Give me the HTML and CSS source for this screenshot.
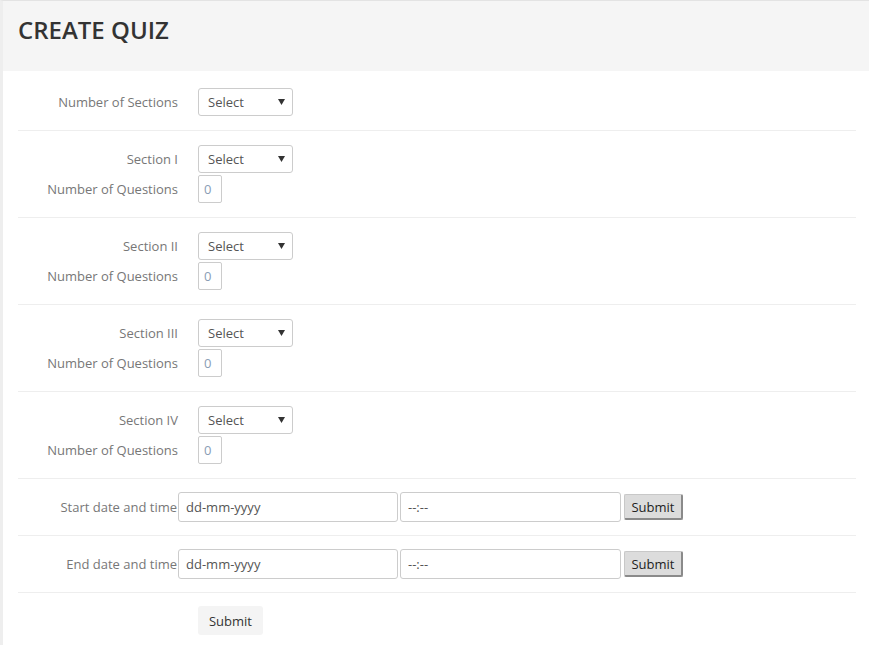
FILE: index.html
```html
<!DOCTYPE html>
<html>
<head>
<meta charset="utf-8">
<link rel="stylesheet" href="styles.css">
</head>
<body>
<div class="page">
  <div class="panel-head">
    <h1 class="title">CREATE QUIZ</h1>
  </div>
  <form class="form">
    <div class="row">
      <div class="field">
        <label class="label">Number of Sections</label>
        <select class="select"><option>Select</option></select>
      </div>
    </div>
    <div class="row">
      <div class="field">
        <label class="label">Section I</label>
        <select class="select"><option>Select</option></select>
      </div>
      <div class="field field-q">
        <label class="label">Number of Questions</label>
        <input class="num" type="text" placeholder="0">
      </div>
    </div>
    <div class="row">
      <div class="field">
        <label class="label">Section II</label>
        <select class="select"><option>Select</option></select>
      </div>
      <div class="field field-q">
        <label class="label">Number of Questions</label>
        <input class="num" type="text" placeholder="0">
      </div>
    </div>
    <div class="row">
      <div class="field">
        <label class="label">Section III</label>
        <select class="select"><option>Select</option></select>
      </div>
      <div class="field field-q">
        <label class="label">Number of Questions</label>
        <input class="num" type="text" placeholder="0">
      </div>
    </div>
    <div class="row">
      <div class="field">
        <label class="label">Section IV</label>
        <select class="select"><option>Select</option></select>
      </div>
      <div class="field field-q">
        <label class="label">Number of Questions</label>
        <input class="num" type="text" placeholder="0">
      </div>
    </div>
    <div class="row row-date">
      <div class="field field-date">
        <label class="label label-date">Start date and time</label>
        <input class="text date" type="text" value="dd-mm-yyyy">
        <input class="text time" type="text" value="--:--">
        <button class="btn-small" type="button">Submit</button>
      </div>
    </div>
    <div class="row row-date">
      <div class="field field-date">
        <label class="label label-date">End date and time</label>
        <input class="text date" type="text" value="dd-mm-yyyy">
        <input class="text time" type="text" value="--:--">
        <button class="btn-small" type="button">Submit</button>
      </div>
    </div>
    <div class="row row-submit">
      <button class="btn" type="button">Submit</button>
    </div>
  </form>
</div>
</body>
</html>
```

FILE: styles.css
```css
* { box-sizing: border-box; }
html, body { margin: 0; padding: 0; background: #fff; }
body {
  font-family: "Open Sans", "Liberation Sans", sans-serif;
  font-size: 13px;
  color: #333;
}
.page {
  border-top: 1px solid #e3e3e3;
  border-left: 3px solid #eeeeee;
  min-height: 645px;
}
.panel-head {
  background: #f5f5f5;
  height: 70px;
  padding: 16px 15px 0;
}
.title {
  margin: 0;
  font-size: 24px;
  line-height: 26px;
  font-weight: 600;
  color: #333;
  letter-spacing: 0;
}
.form {
  padding: 3px 13px 0 15px;
  margin: 0;
}
.row {
  padding: 14px 0;
  border-bottom: 1px solid #eeeeee;
  display: flex;
  flex-direction: column;
  gap: 2px;
}
.row-date { padding: 13px 0; }
.row-submit { border-bottom: none; padding: 13px 0; padding-left: 180px; }
.field {
  display: flex;
  align-items: center;
  gap: 20px;
}
.label {
  width: 160px;
  text-align: right;
  color: #777;
  font-size: 13px;
  line-height: 18px;
}
.select {
  -webkit-appearance: none;
  appearance: none;
  width: 95px;
  height: 28px;
  border: 1px solid #cccccc;
  border-radius: 3px;
  background: #fff url("data:image/svg+xml,%3Csvg xmlns='http://www.w3.org/2000/svg' width='7' height='6'%3E%3Cpath d='M0 0h7L3.5 6z' fill='%23333'/%3E%3C/svg%3E") no-repeat right 7px center;
  padding: 0 0 0 9px;
  font-family: inherit;
  font-size: 13px;
  color: #555;
  margin: 0;
}
.num {
  width: 24px;
  height: 28px;
  border: 1px solid #cccccc;
  border-radius: 2px;
  padding: 0 0 0 5px;
  font-family: inherit;
  font-size: 13px;
  color: #555;
  margin: 0;
}
.num::placeholder { color: #8a9db5; }
.field-date { gap: 0; }
.label-date { width: 159px; margin-right: 1px; }
.text {
  height: 30px;
  border: 1px solid #cccccc;
  border-radius: 3px;
  padding: 0 7px;
  font-family: inherit;
  font-size: 13px;
  color: #555;
  margin: 0;
  background: #fff;
}
.date { width: 220px; }
.time { width: 221px; margin-left: 2px; }
.btn-small {
  margin-left: 3px;
  width: 59px;
  height: 26px;
  background: #dcdcdc;
  border: 1px solid #c8c8c8;
  border-right: 2px solid #8a8a8a;
  border-bottom: 2px solid #8a8a8a;
  border-radius: 2px;
  font-family: inherit;
  font-size: 13px;
  color: #222;
  padding: 0;
}
.btn {
  width: 65px;
  height: 29px;
  background: #f4f4f4;
  border: none;
  border-radius: 3px;
  font-family: inherit;
  font-size: 13px;
  color: #333;
  padding: 0;
}
```
